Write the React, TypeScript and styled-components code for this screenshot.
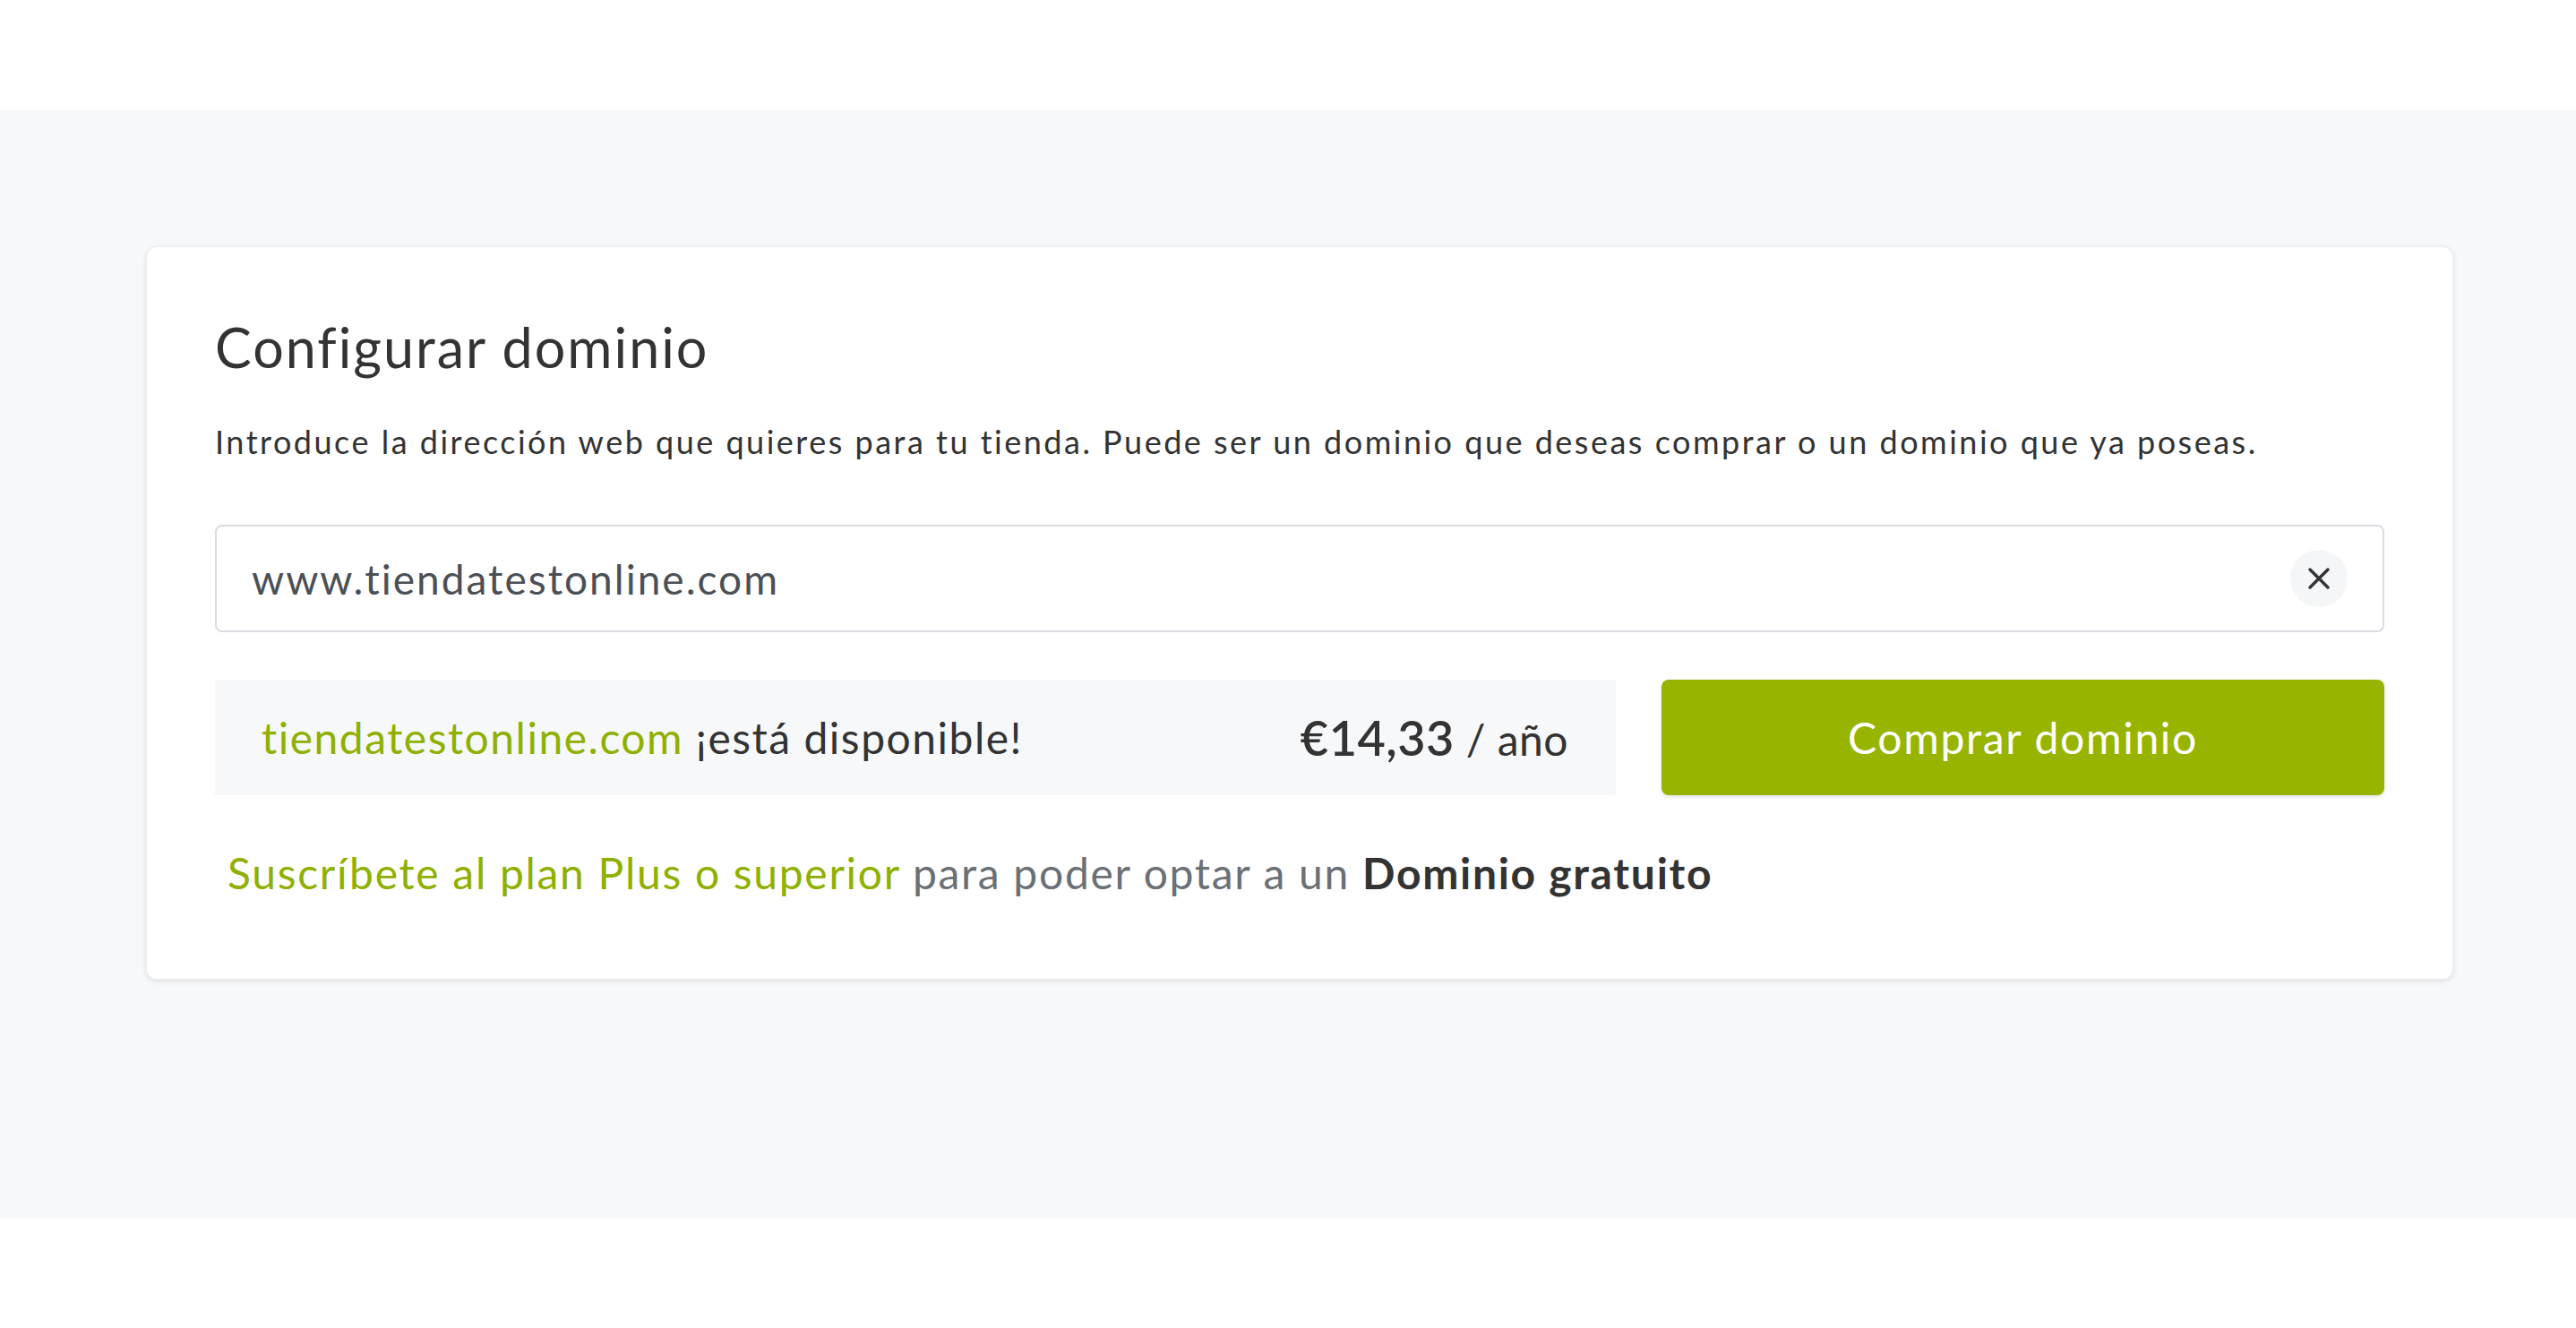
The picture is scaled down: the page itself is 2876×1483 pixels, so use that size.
import React, { FC, ReactElement, useState } from "react";
import styled, { createGlobalStyle } from "styled-components";

const GlobalStyle = createGlobalStyle`
  html, body {
    margin: 0;
    padding: 0;
    background: #ffffff;
  }
  * {
    box-sizing: border-box;
  }
`;

const DomainPage: FC = (): ReactElement => {
  const [domain, setDomain] = useState("www.tiendatestonline.com");

  return (
    <Page>
      <GlobalStyle />
      <Band>
        <Card>
          <Title>Configurar dominio</Title>
          <Intro>
            Introduce la dirección web que quieres para tu tienda. Puede ser un
            dominio que deseas comprar o un dominio que ya poseas.
          </Intro>
          <InputWrap>
            <DomainInput
              type="text"
              value={domain}
              onChange={(e) => setDomain(e.target.value)}
            />
            <ClearButton aria-label="Borrar" onClick={() => setDomain("")}>
              <svg width="28" height="28" viewBox="0 0 28 28">
                <path
                  d="M4 4 L24 24 M24 4 L4 24"
                  stroke="#333333"
                  strokeWidth="3.4"
                  strokeLinecap="round"
                />
              </svg>
            </ClearButton>
          </InputWrap>
          <ResultRow>
            <Availability>
              <span>
                <Link>tiendatestonline.com</Link> ¡está disponible!
              </span>
              <Price>
                <Amount>€14,33</Amount> / año
              </Price>
            </Availability>
            <BuyButton>Comprar dominio</BuyButton>
          </ResultRow>
          <Note>
            <Link>Suscríbete al plan Plus o superior</Link>{" "}
            <Muted>para poder optar a un</Muted> <Strong>Dominio gratuito</Strong>
          </Note>
        </Card>
      </Band>
    </Page>
  );
};

export default DomainPage;

const Page = styled.div`
  padding-top: 123px;
  padding-bottom: 122px;
  font-family: "Lato", "Open Sans", sans-serif;
  color: #333333;
`;

const Band = styled.main`
  height: 1238px;
  background-color: #f7f8fa;
  padding: 152px 137px 0 163px;
`;

const Card = styled.section`
  background: #ffffff;
  border-radius: 12px;
  border: 1px solid #eceef1;
  box-shadow: 0 2px 6px rgba(0, 0, 0, 0.1);
  padding: 76px 76px 89px;
  display: flex;
  flex-direction: column;
`;

const Title = styled.h1`
  margin: 0;
  font-size: 61px;
  line-height: 72px;
  font-weight: 400;
  letter-spacing: 2px;
  color: #333333;
`;

const Intro = styled.p`
  margin: 49px 0 0;
  font-size: 36px;
  line-height: 41px;
  letter-spacing: 2.5px;
  color: #333333;
`;

const InputWrap = styled.div`
  margin-top: 72px;
  height: 120px;
  border: 2px solid #d8dce1;
  border-radius: 8px;
  display: flex;
  align-items: center;
  padding: 0 39px 0 39px;
`;

const DomainInput = styled.input`
  flex: 1 1 auto;
  border: 0;
  outline: 0;
  background: transparent;
  font-family: "Lato", "Open Sans", sans-serif;
  font-size: 46px;
  letter-spacing: 2px;
  color: #4b5057;
  padding: 0;
`;

const ClearButton = styled.button`
  width: 64px;
  height: 64px;
  border-radius: 50%;
  border: 0;
  background: #f5f6f8;
  display: flex;
  align-items: center;
  justify-content: center;
  padding: 0;
  cursor: pointer;
`;

const ResultRow = styled.div`
  margin-top: 53px;
  display: grid;
  grid-template-columns: 1fr 807px;
  gap: 51px;
  height: 129px;
`;

const Availability = styled.div`
  background: #f7f8fa;
  display: flex;
  align-items: center;
  justify-content: space-between;
  padding: 0 53px 0 52px;
  font-size: 48px;
  letter-spacing: 1.5px;
  color: #333333;
`;

const Link = styled.span`
  color: #8fb000;
`;

const Price = styled.span`
  font-size: 48px;
  letter-spacing: 0.5px;
  color: #333333;
`;

const Amount = styled.span`
  font-size: 54px;
  font-weight: 600;
`;

const BuyButton = styled.button`
  background: #97b400;
  border: 0;
  border-radius: 8px;
  color: #ffffff;
  font-family: "Lato", "Open Sans", sans-serif;
  font-size: 48px;
  letter-spacing: 1.7px;
  box-shadow: 0 2px 4px rgba(0, 0, 0, 0.12);
  cursor: pointer;
`;

const Note = styled.p`
  margin: 58px 0 0;
  padding-left: 14px;
  font-size: 48px;
  line-height: 58px;
  letter-spacing: 1.7px;
`;

const Muted = styled.span`
  color: #6b7075;
`;

const Strong = styled.strong`
  font-weight: 700;
  color: #333333;
`;
